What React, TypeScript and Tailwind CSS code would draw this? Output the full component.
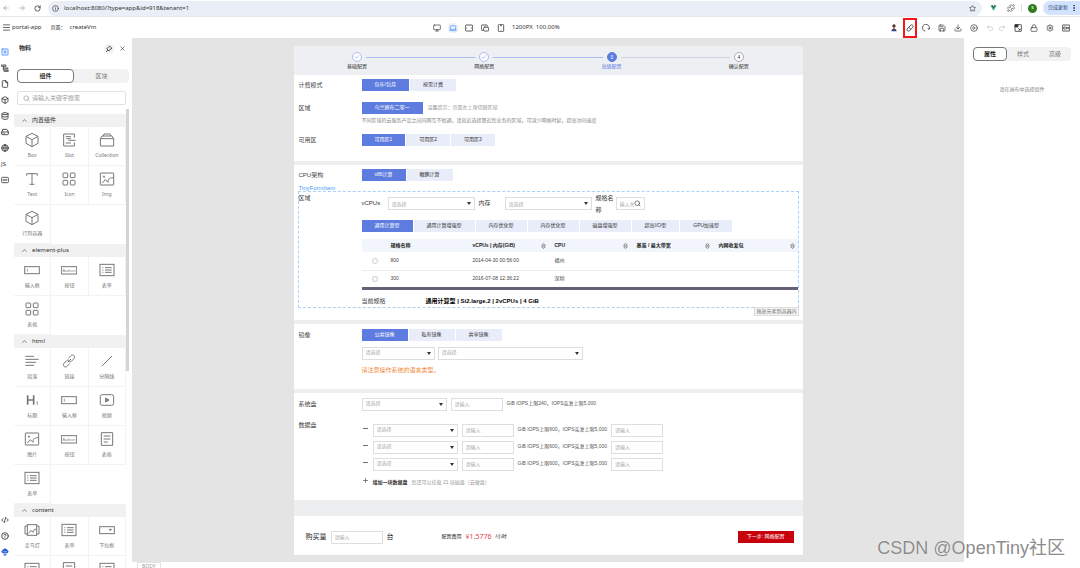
import React from 'react';
import {
  ArrowLeft, ArrowRight, RotateCw, Info, Star, Puzzle, MoreVertical, Menu, Monitor, Laptop,
  Save, Download, CirclePlay, Undo2, Redo2, Lock, Settings, SquarePlus, File, Box,
  Database, HardDrive, Globe, CodeXml, CircleHelp, X, Search, ChevronUp, Check, Minus, Plus,
} from 'lucide-react';

type GlyphName =
  | 'box' | 'slot' | 'collection' | 'text' | 'grid' | 'img' | 'input' | 'button' | 'list'
  | 'paragraph' | 'link' | 'line' | 'heading' | 'video' | 'doc' | 'carousel' | 'select';

interface Material {
  glyph: GlyphName;
  label?: string;
}

interface MaterialGroup {
  title: string;
  items: Material[];
}

const groups: MaterialGroup[] = [
  {
    title: '内置组件',
    items: [
      { glyph: 'box', label: 'Box' },
      { glyph: 'slot', label: 'Slot' },
      { glyph: 'collection', label: 'Collection' },
      { glyph: 'text', label: 'Text' },
      { glyph: 'grid', label: 'Icon' },
      { glyph: 'img', label: 'Img' },
      { glyph: 'box', label: '行列容器' },
    ],
  },
  {
    title: 'element-plus',
    items: [
      { glyph: 'input', label: '输入框' },
      { glyph: 'button', label: '按钮' },
      { glyph: 'list', label: '表单' },
      { glyph: 'grid', label: '表格' },
    ],
  },
  {
    title: 'html',
    items: [
      { glyph: 'paragraph', label: '段落' },
      { glyph: 'link', label: '链接' },
      { glyph: 'line', label: '分隔线' },
      { glyph: 'heading', label: '标题' },
      { glyph: 'input', label: '输入框' },
      { glyph: 'video', label: '视频' },
      { glyph: 'img', label: '图片' },
      { glyph: 'button', label: '按钮' },
      { glyph: 'doc', label: '表格' },
      { glyph: 'list', label: '表单' },
    ],
  },
  {
    title: 'content',
    items: [
      { glyph: 'carousel', label: '走马灯' },
      { glyph: 'list', label: '表单' },
      { glyph: 'select', label: '下拉框' },
      { glyph: 'list' },
      { glyph: 'doc' },
      { glyph: 'list' },
    ],
  },
];

const glyphs: Record<GlyphName, React.ReactNode> = {
  box: <path d="M24 4 42 13v21L24 44 6 34V13ZM6 13l18 10 18-10M24 23v21" />,
  slot: <path d="M40 17V6H8v36h32V31M14 14h16M16 20h14M22 25h22M14 33h16" />,
  collection: <path d="M4 20h40v22H4ZM4 20l5-8h30l5 8M12 12l3-6h18l3 6" />,
  text: <path d="M8 14V8h32v6M24 8v32M17 40h14" />,
  grid: (
    <>
      <rect x="6" y="6" width="14" height="14" rx="2" />
      <rect x="28" y="6" width="14" height="14" rx="2" />
      <rect x="6" y="28" width="14" height="14" rx="2" />
      <rect x="28" y="28" width="14" height="14" rx="2" />
    </>
  ),
  img: (
    <>
      <rect x="4" y="6" width="40" height="36" rx="1" />
      <path d="m10 36 9-10 8 8c0-10 4-13 15-14" />
      <circle cx="15" cy="17" r="2" />
    </>
  ),
  input: (
    <>
      <rect x="2" y="14" width="44" height="21" />
      <path d="M10 20v9" strokeWidth="2" />
    </>
  ),
  button: (
    <>
      <rect x="1" y="14" width="46" height="22" />
      <text x="24" y="29" textAnchor="middle" fontSize="12" fill="currentColor" stroke="none">Button</text>
    </>
  ),
  list: (
    <>
      <rect x="3" y="7" width="42" height="34" />
      <path d="M10 17h3M18 17h20M10 24h3M18 24h20M10 31h3M18 31h20" />
    </>
  ),
  paragraph: <path d="M4 10h26M4 19h40M4 28h32M4 37h26" />,
  link: (
    <path d="m20 28 10-10M22 16l8-8c3-3 7-2 9 0s3 6 0 9l-8 8c-2 2-6 2-8 1M26 32l-8 8c-3 3-7 2-9 0s-3-6 0-9l8-8c2-2 6-2 8-1" />
  ),
  line: <path d="M9 39 39 9" />,
  heading: (
    <>
      <path d="M11 10v28M29 10v28M11 24h18" strokeWidth="5" />
      <path d="m37 31 3-2v10" strokeWidth="2" />
    </>
  ),
  video: (
    <>
      <rect x="4" y="8" width="40" height="32" rx="6" />
      <path d="m20 18 10 6-10 6Z" fill="currentColor" />
    </>
  ),
  doc: <path d="M7 5h34v38H7ZM14 15h20M14 24h20M14 33h12" />,
  carousel: (
    <>
      <rect x="10" y="8" width="28" height="32" />
      <path d="M10 12H3v24h7M38 12h7v24h-7M14 34l7-9 6 6c1-6 4-9 10-10" />
    </>
  ),
  select: (
    <>
      <rect x="2" y="14" width="44" height="21" />
      <path d="M30 21h8l-4 6Z" fill="currentColor" strokeWidth="1" />
    </>
  ),
};

const Glyph: React.FC<{ name: GlyphName }> = ({ name }) => (
  <svg viewBox="0 0 48 48" className="size-4" fill="none" stroke="currentColor" strokeWidth="3" aria-hidden="true">
    {glyphs[name]}
  </svg>
);

// small 24-unit icons used in the bars and the rail
const SmallIcon: React.FC<{ children: React.ReactNode }> = ({ children }) => (
  <svg viewBox="0 0 24 24" className="size-2" fill="none" stroke="currentColor" strokeWidth="2.4" aria-hidden="true">
    {children}
  </svg>
);

const BrowserBar: React.FC = () => (
  <header className="flex h-[17px] shrink-0 items-center border-b border-[#e6e8ee] bg-white text-[#474747]">
    <div className="flex w-12 items-center gap-2 pl-[2px]">
      <ArrowLeft size={8} className="text-[#999]" />
      <ArrowRight size={8} className="text-[#999]" />
      <RotateCw size={7} strokeWidth={3} />
    </div>
    <div className="flex h-[15px] flex-1 items-center gap-[5px] rounded-full bg-[#e9eef7] pl-1 pr-[6px]">
      <Info size={7} strokeWidth={2.5} />
      <span className="flex-1 text-[6px] text-[#333]">localhost:8080/?type=app&amp;id=918&amp;tenant=1</span>
      <Star size={7} strokeWidth={2.5} />
    </div>
    <div className="flex items-center gap-[6px] pl-2">
      <svg viewBox="0 0 24 22" className="mr-1 h-[6px] w-[7px]" aria-hidden="true">
        <path d="M0 1h9l3 5 3-5h9L12 22Z" fill="#41b883" />
        <path d="M5 1h4l3 5 3-5h4l-7 12Z" fill="#35495e" />
      </svg>
      <Puzzle size={8} />
      <span className="h-2 w-px bg-[#d3dcee]" />
      <span className="flex size-[9px] items-center justify-center rounded-full bg-[#2f7d1f] text-[5px] text-white">s</span>
      <button className="flex h-[14px] items-center gap-[2px] rounded-l-full bg-[#d3e3fd] pl-[5px] pr-[2px] text-[5px] text-[#24406e]">
        完成更新
        <MoreVertical size={8} strokeWidth={3} />
      </button>
    </div>
  </header>
);

const Toolbar: React.FC = () => (
  <div className="flex h-[21px] shrink-0 items-center bg-white text-[6px] text-[#333]">
    <div className="flex w-[40%] items-center pl-[2px]">
      <button aria-label="菜单"><Menu size={9} /></button>
      <span className="pl-px">portal-app</span>
      <span className="pl-[9px] text-[5px]">页面：</span>
      <span className="pl-1">createVm</span>
    </div>
    <div className="flex items-center gap-[6px]">
      <button aria-label="桌面" className="p-px"><Monitor size={8} /></button>
      <button aria-label="笔记本" className="rounded-sm bg-[#eef2f8] p-px text-[#3f8cff]"><Laptop size={8} /></button>
      <button aria-label="平板" className="p-px">
        <SmallIcon>
          <rect x="1" y="3" width="22" height="18" rx="3" />
          <path d="M5 11v3M19 11v3" />
        </SmallIcon>
      </button>
      <button aria-label="折叠屏" className="p-px">
        <SmallIcon>
          <path d="M7 19H3a2 2 0 0 1-2-2V5a2 2 0 0 1 2-2h14a2 2 0 0 1 2 2v3M12 9V6" />
          <rect x="8" y="10" width="15" height="11" rx="2" />
        </SmallIcon>
      </button>
      <button aria-label="手机" className="p-px">
        <SmallIcon>
          <rect x="4" y="1" width="16" height="22" rx="3" />
          <path d="M9 5h6M11 18h2" />
        </SmallIcon>
      </button>
      <span>1200PX&nbsp; 100.00%</span>
    </div>
    <div className="flex flex-1 items-center justify-end gap-2 pr-[10px]">
      <svg viewBox="0 0 24 24" className="size-2" aria-hidden="true">
        <circle cx="12" cy="6" r="5" fill="#4b3430" />
        <path d="M9 10h6v5H9Z" fill="#d67f55" />
        <path d="M4 22c0-6 4-8 8-8s8 2 8 8Z" fill="#334a78" />
      </svg>
      <button aria-label="清空" className="-mx-[3px] border-2 border-[#f01818] px-px py-1">
        <SmallIcon>
          <path d="M15 3a3 3 0 0 1 4 0l2 2a3 3 0 0 1 0 4L10 21H5l-2-3a3 3 0 0 1 0-3ZM8 10l7 6" />
        </SmallIcon>
      </button>
      <button aria-label="刷新">
        <SmallIcon>
          <path d="M10 21a10 10 0 1 1 11-6M17 14l4 2 2-4" />
        </SmallIcon>
      </button>
      <button aria-label="保存"><Save size={8} /></button>
      <button aria-label="下载"><Download size={8} /></button>
      <button aria-label="预览"><CirclePlay size={8} /></button>
      <span className="flex gap-1 text-[#c4c4c4]">
        <button aria-label="撤销"><Undo2 size={8} /></button>
        <button aria-label="重做"><Redo2 size={8} /></button>
      </span>
      <button aria-label="全屏">
        <SmallIcon>
          <rect x="3" y="2" width="19" height="20" rx="1" />
          <path d="M3 2h9v7H3Z" fill="currentColor" />
          <path d="m13 13 5 5m0-4v4h-4" />
        </SmallIcon>
      </button>
      <button aria-label="锁定"><Lock size={8} /></button>
      <button aria-label="设置"><Settings size={8} /></button>
      <button aria-label="语言">
        <SmallIcon>
          <rect x="1" y="3" width="22" height="18" rx="1" />
          <path d="M11 9H5v6h6M13 16V9l3 4 3-4v7" />
        </SmallIcon>
      </button>
    </div>
  </div>
);

const Rail: React.FC = () => (
  <nav className="flex w-[14px] shrink-0 flex-col items-start gap-2 bg-white pb-3 pl-px pt-[10px] text-[#333]">
    <button aria-label="物料" className="bg-[#eef4ff] text-[#2f7bf6]"><SquarePlus size={8} /></button>
    <button aria-label="大纲树">
      <SmallIcon>
        <path d="M1 3h14v4H1ZM7 7v12M7 12h14v3H8M8 19h14v3H8" />
      </SmallIcon>
    </button>
    <button aria-label="页面"><File size={8} strokeWidth={2.5} /></button>
    <button aria-label="区块"><Box size={8} strokeWidth={2.5} /></button>
    <button aria-label="数据源"><Database size={8} strokeWidth={2.5} /></button>
    <button aria-label="资源"><HardDrive size={8} strokeWidth={2.5} /></button>
    <button aria-label="国际化"><Globe size={8} strokeWidth={2.5} /></button>
    <button className="h-2 text-[6px] leading-[8px]">JS</button>
    <button aria-label="状态">
      <SmallIcon>
        <rect x="1" y="4" width="22" height="16" rx="4" />
        <path d="m5 10 2 4 2-4M11 14l1-4 2 4M17 14v-4h2" />
      </SmallIcon>
    </button>
    <div className="flex-1" />
    <button aria-label="源码"><CodeXml size={8} strokeWidth={2.5} /></button>
    <button aria-label="帮助"><CircleHelp size={8} strokeWidth={2.5} /></button>
    <button aria-label="助手">
      <svg viewBox="0 0 24 24" className="size-2">
        <path d="M5 5 12 1l7 4 4 6-4 5H5l-4-5Z" fill="#2d5bd7" />
        <path d="M7 17h10l-2 6H9Z" fill="#4f7df0" />
        <circle cx="9" cy="11" r="2" fill="#bcd2ff" />
        <circle cx="15" cy="11" r="2" fill="#bcd2ff" />
      </svg>
    </button>
  </nav>
);

const MaterialPanel: React.FC = () => (
  <aside className="flex w-[118px] shrink-0 flex-col overflow-hidden bg-white text-[#333]">
    <div className="flex h-[21px] shrink-0 items-center gap-[5px] pl-[5px] pr-[6px]">
      <h2 className="flex-1 text-[6px] font-bold">物料</h2>
      <button aria-label="固定" className="rounded-sm bg-[#f2f2f2] p-px">
        <SmallIcon>
          <path d="m14 3 7 7-5 2-4 6-7-7 6-4ZM9 15l-6 6" />
        </SmallIcon>
      </button>
      <button aria-label="关闭"><X size={7} /></button>
    </div>
    <div className="mx-[3px] mt-[10px] flex h-[14px] shrink-0 rounded-sm bg-[#f2f2f2] text-[6px]">
      <button className="flex-1 rounded-sm border border-[#777] bg-white font-bold">组件</button>
      <button className="flex-1 text-[#777]">区块</button>
    </div>
    <div className="ml-[3px] mr-[6px] mt-2 flex h-[14px] shrink-0 items-center gap-[2px] rounded-xs border border-[#e2e2e2] pl-[5px]">
      <Search size={7} className="shrink-0 text-[#888]" />
      <input aria-label="搜索" placeholder="请输入关键字搜索" className="w-full min-w-0 text-[6px] outline-none placeholder:text-[#999]" />
    </div>
    <div className="mt-1 flex min-h-0 flex-1">
      <div className="min-h-0 flex-1 overflow-hidden pt-[5px]">
        {groups.map((group) => (
          <section key={group.title}>
            <h3 className="flex h-[13px] items-center gap-1 bg-[#f1f1f1] pl-[7px] text-[6px]">
              <ChevronUp size={7} /> {group.title}
            </h3>
            <div className="grid grid-cols-3">
              {group.items.map((item, i) => (
                <button
                  key={i}
                  className="flex h-[39px] flex-col items-center gap-1 border-b border-r border-[#f3f3f3] pt-[5px] text-[5px] text-[#777]"
                >
                  <Glyph name={item.glyph} />
                  {item.label}
                </button>
              ))}
            </div>
          </section>
        ))}
      </div>
      <div className="mr-[3px] h-[57%] w-[3px] bg-[#d4d4d4]" />
    </div>
  </aside>
);

const steps = ['基础配置', '网络配置', '高级配置', '确认配置'];

const Steps: React.FC = () => (
  <ol className="grid h-[29px] grid-cols-4 bg-[#edeff2] pt-[6px] text-[5px] text-[#333]">
    {steps.map((step, i) => (
      <li key={step} className="flex flex-col items-center">
        <div className="flex w-full items-center gap-1">
          <span className={`h-px flex-1 ${i === 0 ? '' : i < 3 ? 'bg-[#a9bdf0]' : 'bg-[#ccd3e0]'}`} />
          <span
            className={`flex size-[10px] items-center justify-center rounded-full border leading-none ${
              i === 2
                ? 'border-[#5e7ce0] bg-[#5e7ce0] text-white'
                : i === 3
                  ? 'border-[#aaa] bg-white'
                  : 'border-[#a9bdf0] bg-white text-[#5e7ce0]'
            }`}
          >
            {i < 2 ? <Check size={6} /> : i + 1}
          </span>
          <span className={`h-px flex-1 ${i === 3 ? '' : i < 2 ? 'bg-[#a9bdf0]' : 'bg-[#ccd3e0]'}`} />
        </div>
        <span className={`mt-px ${i === 2 ? 'text-[#5e7ce0]' : ''}`}>{step}</span>
      </li>
    ))}
  </ol>
);

const ButtonGroup: React.FC<{ options: string[] }> = ({ options }) => (
  <div className="flex gap-px">
    {options.map((option, i) => (
      <button
        key={i}
        className={`h-3 whitespace-nowrap px-[13px] text-[5px] ${i === 0 ? 'bg-[#5e7ce0] text-white' : 'bg-[#e9edfa] text-[#333]'}`}
      >
        {option}
      </button>
    ))}
  </div>
);

const Select: React.FC<{ label: string; width: string }> = ({ label, width }) => (
  <div className={`relative h-[13px] ${width}`}>
    <select aria-label={label} className="block size-full appearance-none border border-[#dcdee3] bg-white pl-[3px] text-[5px] text-[#aaa] outline-none">
      <option>请选择</option>
    </select>
    <svg viewBox="0 0 8 6" className="pointer-events-none absolute right-1 top-[5px] h-[3px] w-1" aria-hidden="true">
      <path d="M0 0h8L4 6Z" fill="#333" />
    </svg>
  </div>
);

const TextBox: React.FC<{ label: string }> = ({ label }) => (
  <input
    aria-label={label}
    placeholder="请输入"
    className="h-[13px] w-[52px] border border-[#dcdee3] bg-white pl-[3px] text-[5px] outline-none placeholder:text-[#aaa]"
  />
);

interface FieldProps {
  label: string;
  className?: string;
  children: React.ReactNode;
}

const Field: React.FC<FieldProps> = ({ label, className = '', children }) => (
  <div className={`flex ${className}`}>
    <span className="w-[63px] shrink-0 text-[6px] leading-[12px] text-[#444]">{label}</span>
    <div className="min-w-0 flex-1">{children}</div>
  </div>
);

const SortIcon: React.FC = () => (
  <svg viewBox="0 0 12 16" className="h-[6px] w-[5px]" fill="none" stroke="#777" strokeWidth="2" aria-hidden="true">
    <path d="m1 6 5-5 5 5ZM1 10l5 5 5-5Z" />
  </svg>
);

const columns = [
  { title: '规格名称', width: 'w-[82px]', sort: false },
  { title: 'vCPUs | 内存(GiB)', width: 'w-[82px]', sort: true },
  { title: 'CPU', width: 'w-[82px]', sort: true },
  { title: '基准 / 最大带宽', width: 'w-[82px]', sort: true },
  { title: '内网收发包', width: '', sort: true },
];

const flavors = [
  { name: '800', date: '2014-04-30 00:56:00', city: '福州' },
  { name: '300', date: '2016-07-08 12:36:22', city: '深圳' },
];

const FlavorTable: React.FC = () => (
  <table className="mt-[7px] w-full table-fixed border-b-[3px] border-[#665f78] text-left text-[5px] text-[#444]">
    <thead>
      <tr className="h-[13px] bg-[#f2f5fc] text-[#222]">
        <th className="w-[23px]" />
        {columns.map((column) => (
          <th key={column.title} className={`py-0 pl-[6px] pr-[3px] ${column.width}`}>
            <div className="flex items-center justify-between whitespace-nowrap">
              {column.title}
              {column.sort && <SortIcon />}
            </div>
          </th>
        ))}
      </tr>
    </thead>
    <tbody>
      {flavors.map((flavor) => (
        <tr key={flavor.name} className="h-[18px] border-b border-[#ececf0]">
          <td className="pl-[10px]">
            <input type="radio" name="flavor" aria-label={flavor.name} className="block size-[6px] appearance-none rounded-full border border-[#ccc]" />
          </td>
          <td className="px-[6px]">{flavor.name}</td>
          <td className="px-[6px]">{flavor.date}</td>
          <td className="px-[6px]">{flavor.city}</td>
          <td />
          <td />
        </tr>
      ))}
    </tbody>
  </table>
);

const VmPage: React.FC = () => (
  <div className="mx-auto flex w-full max-w-[509px] flex-col gap-1 bg-[#edeef0] font-['Liberation_Sans','Noto_Sans_CJK_SC',sans-serif] text-[5px]">
    <div>
      <Steps />
      <section className="bg-white px-[5px] pb-[15px] pt-1">
        <Field label="计费模式"><ButtonGroup options={['包年/包月', '按需计费']} /></Field>
        <Field label="区域" className="mt-[11px]">
          <div className="flex items-center gap-[5px] text-[#999]">
            <ButtonGroup options={['乌兰察布二零一']} />
            <span>温馨提示：页面左上角切换区域</span>
          </div>
          <p className="mt-[2px] leading-[8px] text-[#888]">
            不同区域的云服务产品之间内网互不相通，请就近选择靠近您业务的区域，可减少网络时延，提高访问速度
          </p>
        </Field>
        <Field label="可用区" className="mt-[10px]">
          <ButtonGroup options={['可用区1', '可用区2', '可用区3']} />
        </Field>
      </section>
    </div>

    <section className="bg-white px-1 pb-3 pt-1">
      <Field label="CPU架构" className="pl-px"><ButtonGroup options={['x86计算', '鲲鹏计算']} /></Field>
      <div className="relative mt-[10px] border border-dashed border-[#a8d2f8]">
        <span className="absolute bottom-full left-0 text-[6px] leading-[7px] text-[#4a9df5]">TinyFormItem</span>
        <Field label="区域">
          <div className="flex h-6 text-[6px] leading-[12px] text-[#333]">
            <span className="w-[26px] pt-[5px]">vCPUs</span>
            <div className="pt-[5px]"><Select label="vCPUs" width="w-[87px]" /></div>
            <span className="w-[30px] pl-1 pt-[5px]">内存</span>
            <div className="pt-[5px]"><Select label="内存" width="w-[87px]" /></div>
            <label htmlFor="flavor-name" className="ml-1 w-5">规格名称</label>
            <div className="mt-[5px] flex h-[13px] w-[29px] items-center border border-[#dcdee3] px-[3px]">
              <input id="flavor-name" placeholder="输入关键字" className="min-w-0 flex-1 text-[5px] outline-none placeholder:text-[#aaa]" />
              <Search size={7} className="shrink-0" />
            </div>
          </div>
          <div className="mt-1">
            <ButtonGroup
              options={['通用计算型', '通用计算增强型', '内存优化型', '内存优化型', '磁盘增强型', '超高I/O型', 'GPU加速型']}
            />
          </div>
          <FlavorTable />
          <div className="flex items-center pt-[5px] text-[6px] leading-[12px]">
            <span className="w-16 text-[#444]">当前规格</span>
            <strong className="text-black">通用计算型 | Si2.large.2 | 2vCPUs | 4 GiB</strong>
          </div>
        </Field>
        <span className="absolute -right-px top-full border border-[#ddd] bg-[#f3f3f3] px-px text-[5px] leading-[7px] text-[#777]">
          拖放元素到容器内
        </span>
      </div>
    </section>

    <section className="bg-white px-[5px] pb-[14px] pt-[5px]">
      <Field label="镜像">
        <ButtonGroup options={['公共镜像', '私有镜像', '共享镜像']} />
        <div className="mt-[6px] flex gap-[3px]">
          <Select label="镜像类型" width="w-[73px]" />
          <Select label="镜像版本" width="w-[145px]" />
        </div>
        <p className="mt-[6px] text-[6px] leading-[9px] text-[#f08a3c]">请注意操作系统的语言类型。</p>
      </Field>
    </section>

    <section className="bg-white px-[5px] pb-[9px] pt-[5px]">
      <Field label="系统盘">
        <div className="flex items-center gap-1 text-[#555]">
          <Select label="系统盘类型" width="w-[85px]" />
          <TextBox label="系统盘大小" />
          <span>GiB IOPS上限240，IOPS突发上限5,000</span>
        </div>
      </Field>
      <Field label="数据盘" className="mt-2">
        <div className="flex flex-col gap-1 pt-[5px] text-[#555]">
          {[1, 2, 3].map((disk) => (
            <div key={disk} className="flex items-center gap-1">
              <button aria-label="删除数据盘" className="mb-1 w-[7px] text-black"><Minus size={7} /></button>
              <Select label={`数据盘${disk}`} width="w-[85px]" />
              <TextBox label={`数据盘${disk}大小`} />
              <span>GiB IOPS上限600，IOPS突发上限5,000</span>
              <TextBox label={`数据盘${disk}数量`} />
            </div>
          ))}
        </div>
        <div className="mt-1 flex h-4 items-center gap-1">
          <button className="flex items-center gap-1 font-bold text-[#333]"><Plus size={7} className="mb-1" />增加一块数据盘</button>
          <span className="text-[#999]">您还可以挂载 21 块磁盘（云硬盘）</span>
        </div>
      </Field>
    </section>

    <footer className="mt-3 flex h-[39px] items-center bg-white pl-3 pr-[9px] pt-1">
      <label className="flex items-center gap-1 text-[7px] text-[#222]">
        购买量 <TextBox label="购买量" /> 台
      </label>
      <div className="flex flex-1 items-center gap-1 pl-12 text-[#222]">
        配置费用
        <span className="font-['Noto_Sans','Noto_Sans_CJK_SC',sans-serif] text-[7px] text-[#e0434c]">¥1.5776</span>
        /小时
      </div>
      <button className="h-3 bg-[#c7000b] px-[9px] text-[5px] text-white">下一步: 网络配置</button>
    </footer>
  </div>
);

const PropertyPanel: React.FC = () => (
  <aside className="w-[116px] shrink-0 bg-white px-[9px] pt-[9px] text-[6px] text-[#777]">
    <div className="flex h-[14px] rounded-sm bg-[#f2f2f2]">
      <button className="flex-1 rounded-sm border border-[#777] bg-white font-bold text-[#222]">属性</button>
      <button className="flex-1">样式</button>
      <button className="flex-1">高级</button>
    </div>
    <p className="mt-[25px] text-center text-[5px] text-[#888]">请在画布中选择组件</p>
  </aside>
);

export default function App() {
  return (
    <div className="relative flex h-screen flex-col overflow-hidden bg-white font-['Noto_Sans','Noto_Sans_CJK_SC',sans-serif]">
      <BrowserBar />
      <Toolbar />
      <div className="flex min-h-0 flex-1">
        <Rail />
        <MaterialPanel />
        <main className="flex min-w-0 flex-1 flex-col">
          <div className="min-h-0 flex-1 overflow-hidden bg-[#e4e4e4] pt-2">
            <VmPage />
          </div>
          <div className="h-[6px] shrink-0 overflow-hidden pl-[5px]">
            <button className="block border border-[#e4e4e4] px-1 text-[5px] text-[#999]">BODY</button>
          </div>
        </main>
        <PropertyPanel />
      </div>
      <span className="pointer-events-none absolute bottom-2 right-[15px] font-['Liberation_Sans','Noto_Sans_CJK_SC',sans-serif] text-[18px] leading-6 text-[#8c8c8c] [text-shadow:0_0_1px_#fff]">
        CSDN @OpenTiny社区
      </span>
    </div>
  );
}
